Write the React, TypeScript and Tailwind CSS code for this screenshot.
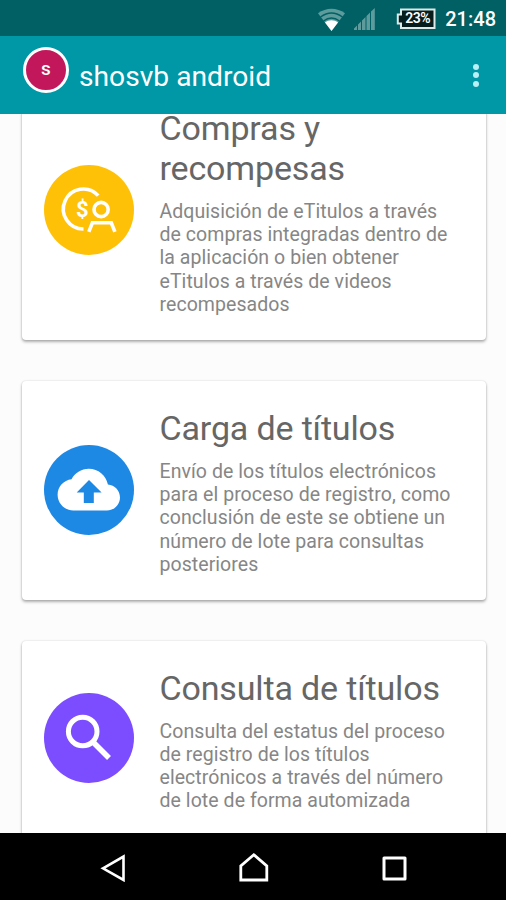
import type { ReactNode } from "react";

type CardProps = {
  title: string[];
  lines: string[];
  color: string;
  height: string;
  icon: ReactNode;
};

function CoinUserIcon() {
  return (
    <svg width="90" height="90" viewBox="0 0 90 90" fill="none" stroke="#fff" strokeWidth="3.6">
      <path d="M54.2 30.6A20 20 0 1 0 39.5 64" />
      <circle cx="57.1" cy="44.5" r="7.1" />
      <path d="M44.8 66.9L48.4 57.8H67.3L70.9 66.9" />
      <text x="38.3" y="52.3" textAnchor="middle" fontSize="22" fontWeight="700" fill="#fff" stroke="none">$</text>
    </svg>
  );
}

function CloudIcon() {
  return (
    <svg width="90" height="90" viewBox="0 0 90 90">
      <path
        transform="translate(13.6 13.4) scale(2.6)"
        fill="#fff"
        d="M19.35 10.04C18.67 6.59 15.64 4 12 4 9.11 4 6.6 5.64 5.35 8.04 2.34 8.36 0 10.91 0 14c0 3.31 2.69 6 6 6h13c2.76 0 5-2.24 5-5 0-2.64-2.05-4.78-4.65-4.96z"
      />
      <path d="M32.7 47.6L45 35L57.6 47.6H49.8V58H39.8V47.6Z" fill="#1e88e5" />
    </svg>
  );
}

function SearchIcon() {
  return (
    <svg width="90" height="90" viewBox="0 0 90 90" fill="none" stroke="#fff">
      <circle cx="38.7" cy="38.5" r="14.3" strokeWidth="5" />
      <path d="M49 49L65 65" strokeWidth="5.5" />
    </svg>
  );
}

function Card({ title, lines, color, height, icon }: CardProps) {
  return (
    <div className={`${height} flex shrink-0 items-center rounded-[4px] bg-white pl-[22px] shadow-[0_2px_3px_rgba(0,0,0,0.3),0_0_2px_rgba(0,0,0,0.16)]`}>
      <div className={`${color} mb-px size-[90px] shrink-0 rounded-full`}>{icon}</div>
      <div className="ml-[25.5px] pt-[3px] whitespace-nowrap">
        <h2 className="text-[34px] leading-[40px] tracking-[-0.15px] text-[#666]">
          {title.map((line) => (
            <span key={line} className="block">{line}</span>
          ))}
        </h2>
        <p className="mt-[12px] text-[19.5px] leading-[23.2px] tracking-[0.06px] text-[#868686]">
          {lines.map((line) => (
            <span key={line} className="block">{line}</span>
          ))}
        </p>
      </div>
    </div>
  );
}

export default function App() {
  return (
    <div className="flex h-[900px] w-[506px] flex-col overflow-hidden bg-[#fcfcfc] font-['Roboto',sans-serif]">
      <div className="flex h-9 shrink-0 items-center justify-end bg-[#006064] pt-px pr-[10px]">
        <svg width="27" height="24" viewBox="0 0 27 24" className="mr-[9px]">
          <path d="M0 6.2C8 0.2 19 0.2 27 6.2L13.5 24Z" fill="#5d9b9d" />
          <path d="M2.5 10C9.5 5 17.5 5 24.5 10M5.5 14C10.5 10.3 16.5 10.3 21.5 14" fill="none" stroke="#006064" strokeWidth="1.4" />
          <path d="M7 15.4C11 12.6 16 12.6 20 15.4L13.5 24Z" fill="#fff" />
        </svg>
        <svg width="21" height="22" viewBox="0 0 21 22" className="mr-[21px]" fill="#5d9b9d">
          <path d="M0 22V20.4L3 17.6V22ZM4 22V16.6L7 13.5V22ZM8 22V12.5L11.5 9V22ZM12.5 22V8L16 4.5V22ZM17 22V3.5L20.8 0V22Z" />
        </svg>
        <div className="relative mr-[9px] h-[22px] w-10">
          <svg width="40" height="22" viewBox="0 0 40 22">
            <path d="M5 1.5H38.5V20H5V15.5H1.8V6.5H5Z" fill="#061c1d" stroke="#dceaea" strokeWidth="2" />
          </svg>
          <span className="absolute inset-0 pl-[3px] text-center text-[14px] leading-[21px] font-semibold tracking-[-0.5px] text-white">23%</span>
        </div>
        <span className="text-[20px] leading-6 font-medium text-white">21:48</span>
      </div>

      <div className="z-10 flex h-[78px] shrink-0 items-center bg-[#0097a7] pr-[27px] pl-[23px]">
        <div className="-mt-[10px] flex size-[46px] items-center justify-center rounded-full border-[3px] border-white bg-[#c2185b] pb-[2px] text-[19px] font-medium text-white">s</div>
        <span className="ml-[10px] pt-[3px] text-[28.2px] leading-8 text-white">shosvb android</span>
        <div className="ml-auto flex flex-col gap-[2.5px]">
          <div className="size-[6px] rounded-full bg-[#b8f0f5]" />
          <div className="size-[6px] rounded-full bg-[#b8f0f5]" />
          <div className="size-[6px] rounded-full bg-[#b8f0f5]" />
        </div>
      </div>

      <div className="h-[719px] shrink-0 overflow-hidden">
        <div className="-mt-[33px] flex flex-col gap-[41px] pr-[20px] pl-[22px]">
          <Card
            height="h-[259px]"
            color="bg-[#ffc107]"
            icon={<CoinUserIcon />}
            title={["Compras y", "recompesas"]}
            lines={[
              "Adquisición de eTitulos a través",
              "de compras integradas dentro de",
              "la aplicación o bien obtener",
              "eTitulos a través de videos",
              "recompesados",
            ]}
          />
          <Card
            height="h-[219px]"
            color="bg-[#1e88e5]"
            icon={<CloudIcon />}
            title={["Carga de títulos"]}
            lines={[
              "Envío de los títulos electrónicos",
              "para el proceso de registro, como",
              "conclusión de este se obtiene un",
              "número de lote para consultas",
              "posteriores",
            ]}
          />
          <Card
            height="h-[195px]"
            color="bg-[#7c4dff]"
            icon={<SearchIcon />}
            title={["Consulta de títulos"]}
            lines={[
              "Consulta del estatus del proceso",
              "de registro de los títulos",
              "electrónicos a través del número",
              "de lote de forma automizada",
            ]}
          />
        </div>
      </div>

      <div className="flex h-[67px] shrink-0 items-center justify-between bg-black pt-px pr-[98px] pl-[99px]">
        <svg width="28" height="30" viewBox="0 0 28 30" fill="none" stroke="#fff" strokeWidth="2.6">
          <path d="M4 16.3L24.5 4.5V28Z" />
        </svg>
        <svg width="30" height="30" viewBox="0 0 30 30" fill="none" stroke="#fff" strokeWidth="2.8">
          <path d="M1.8 28V14L14.8 2.8L27.8 14V28Z" />
        </svg>
        <svg width="28" height="30" viewBox="0 0 28 30" fill="none" stroke="#fff" strokeWidth="3" strokeLinejoin="round">
          <rect x="4" y="6" width="21" height="21" />
        </svg>
      </div>
    </div>
  );
}
